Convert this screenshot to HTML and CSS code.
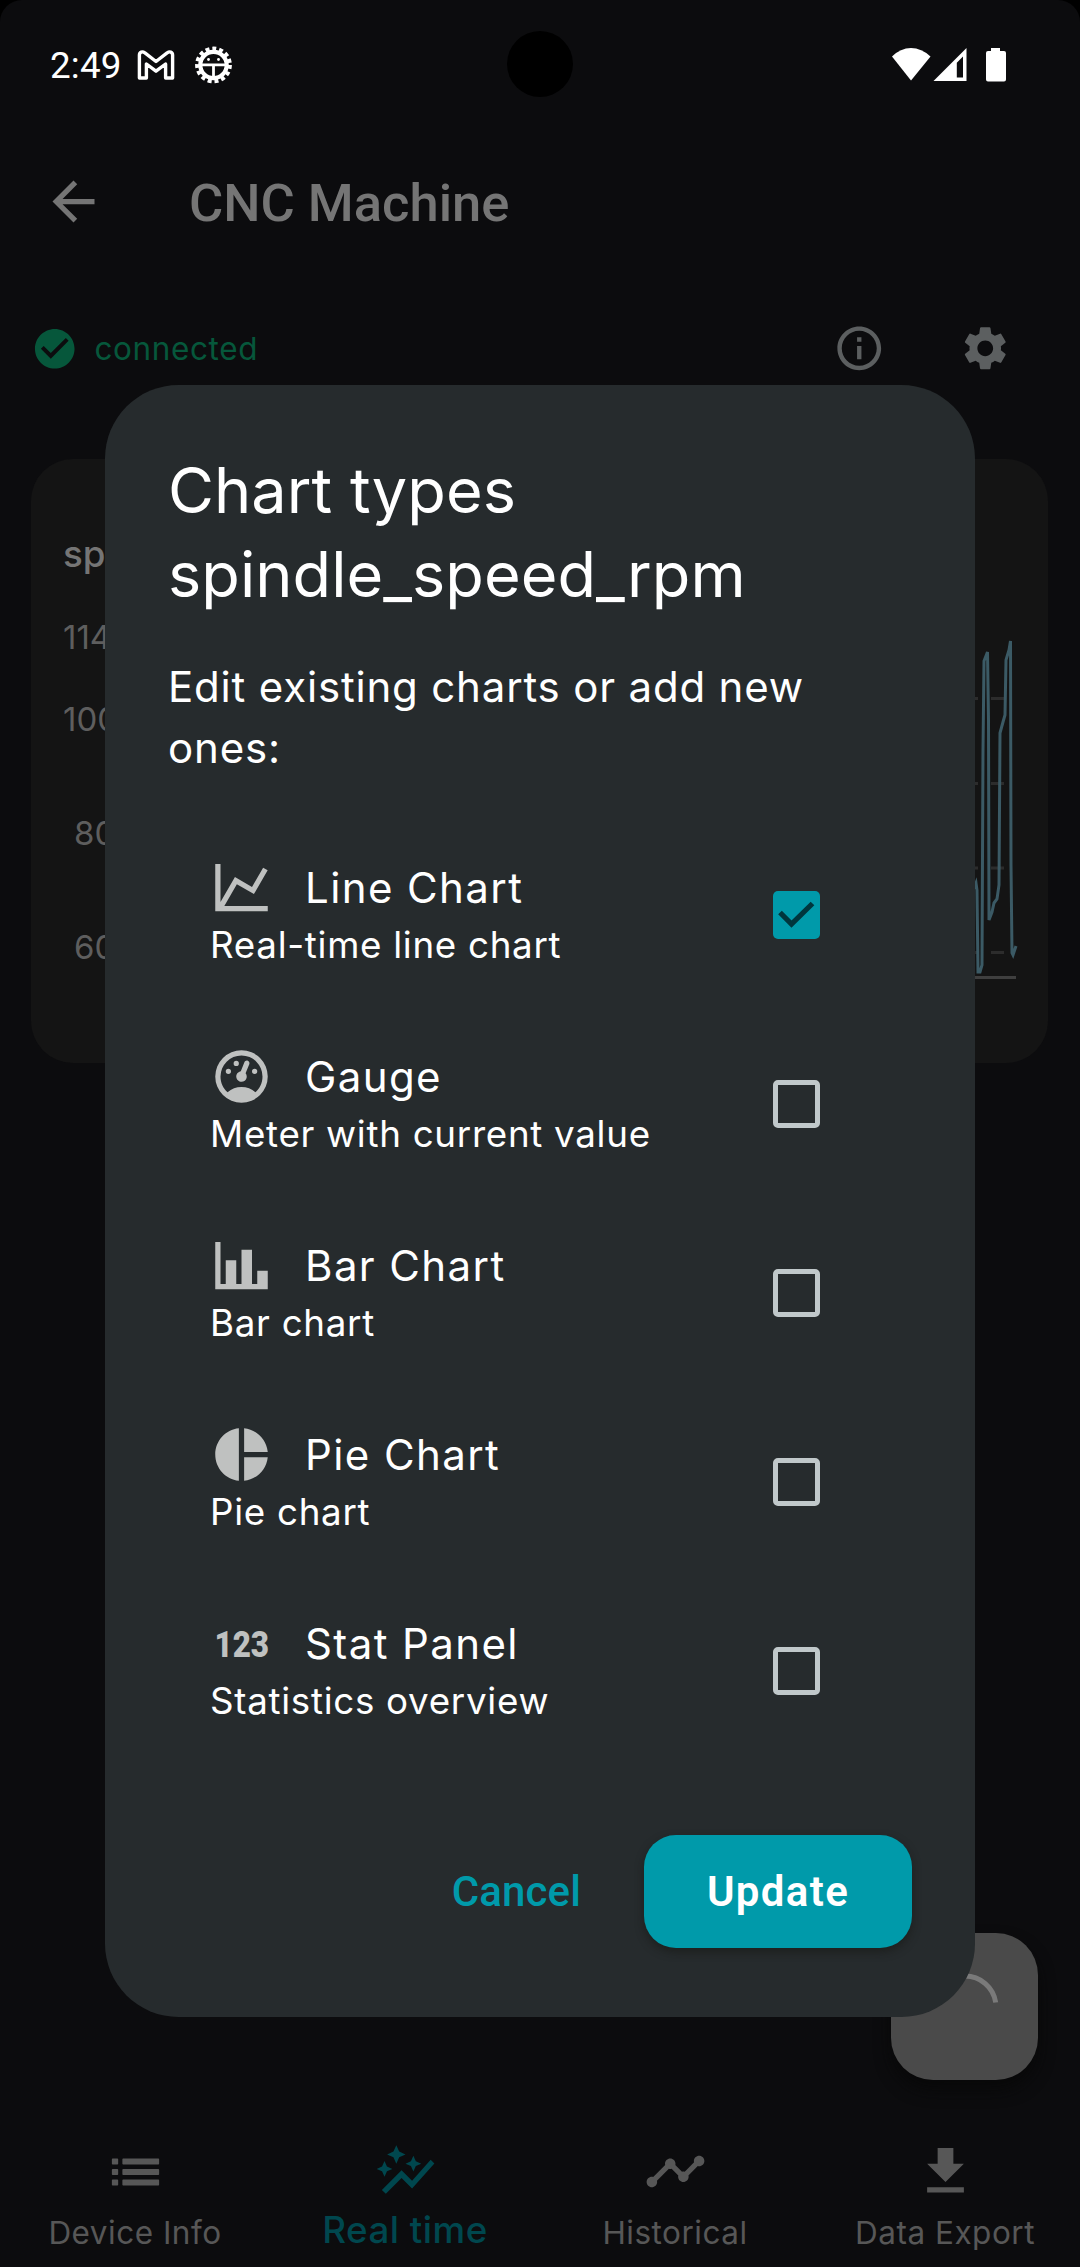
FILE: index.html
```
<!DOCTYPE html>
<html lang="en">
<head>
    <meta charset="UTF-8">
    <meta name="viewport" content="width=device-width, initial-scale=1.0">
    <title>CNC Machine</title>
    <link rel="stylesheet" href="styles.css">
</head>
<body>
    <div class="screen">
        <!-- Status Bar -->
        <div class="status-bar">
            <span class="time">2:49</span>
            <svg class="mail-icon" width="38" height="30" viewBox="0 0 38 30" fill="none" stroke="#fff" stroke-width="3.4" stroke-linejoin="round">
                <path d="M2.4 28V5C2.4 2 5.5 1 7.6 2.7L19 11.5 30.4 2.7C32.5 1 35.6 2 35.6 5V28H28.6V14L19 21.2 9.4 14V28Z"/>
            </svg>
            <svg class="bug-icon" width="37" height="38" viewBox="0 0 37 38" fill="none" stroke="#fff">
                <circle cx="18.5" cy="19" r="16.2" stroke-width="4.4" stroke-dasharray="3.9 2.89"/>
                <circle cx="18.5" cy="19" r="13.2" stroke-width="4.2"/>
                <path d="M6 18.8H31M18.5 18.8V32" stroke-width="2.8"/>
                <circle cx="13.5" cy="13.5" r="1.4" fill="#fff" stroke="none"/>
                <circle cx="23.5" cy="13.5" r="1.4" fill="#fff" stroke="none"/>
            </svg>
            <svg class="signal-icons" width="116" height="36" viewBox="0 0 116 36" fill="#fff">
                <path d="M1 9.5Q9.500 1 20 1T39.500 9.500L20 33.500Z"/>
                <path fill-rule="evenodd" d="M75.500 1V34H42.500ZM72 9.500L65.800 15.700V30.500H72Z"/>
                <path d="M100 1h9v3h4q2 0 2 2v26.500q0 2-2 2h-16q-2 0-2-2v-26.500q0-2 2-2h3z"/>
            </svg>
        </div>
        <div class="camera"></div>

        <!-- App Bar -->
        <header>
            <svg class="icon" viewBox="0 0 24 24"><path d="M20 11H7.830l5.590-5.590L12 4l-8 8 8 8 1.410-1.410L7.830 13H20v-2z"/></svg>
            <h1>CNC Machine</h1>
        </header>

        <!-- Connection Row -->
        <div class="connection">
            <svg class="check" viewBox="0 0 24 24"><path d="M12 2C6.480 2 2 6.480 2 12s4.480 10 10 10 10-4.480 10-10S17.520 2 12 2zm-2 15l-5-5 1.410-1.410L10 14.170l7.590-7.590L19 8l-9 9z"/></svg>
            <span>connected</span>
            <svg class="action info" viewBox="0 0 24 24"><path d="M11 7h2v2h-2zm0 4h2v6h-2zm1-9C6.480 2 2 6.480 2 12s4.480 10 10 10 10-4.480 10-10S17.520 2 12 2zm0 18c-4.410 0-8-3.590-8-8s3.590-8 8-8 8 3.590 8 8-3.590 8-8 8z"/></svg>
            <svg class="action" viewBox="0 0 24 24"><path d="M19.140 12.940c.04-.3.060-.61.060-.94 0-.32-.02-.64-.07-.94l2.030-1.580c.18-.14.23-.41.120-.61l-1.920-3.320c-.12-.22-.37-.29-.59-.22l-2.390.96c-.5-.38-1.030-.7-1.620-.94l-.36-2.540c-.04-.24-.24-.41-.48-.41h-3.840c-.24 0-.43.17-.47.41l-.36 2.540c-.59.24-1.130.57-1.620.94l-2.390-.96c-.22-.08-.47 0-.59.22L2.740 8.870c-.12.21-.08.47.12.61l2.030 1.580c-.05.3-.09.63-.09.94s.02.64.07.94l-2.030 1.580c-.18.14-.23.41-.12.61l1.920 3.320c.12.22.37.29.59.22l2.390-.96c.5.38 1.030.7 1.620.94l.36 2.540c.05.24.24.41.48.41h3.840c.24 0 .44-.17.47-.41l.36-2.540c.59-.24 1.130-.56 1.620-.94l2.390.96c.22.08.47 0 .59-.22l1.920-3.320c.12-.22.07-.47-.12-.61l-2.010-1.580zM12 15.600c-1.980 0-3.600-1.620-3.600-3.600s1.620-3.600 3.600-3.600 3.600 1.620 3.600 3.600-1.620 3.600-3.600 3.600z"/></svg>
        </div>

        <!-- Chart Card -->
        <div class="chart-card">
            <h2>spindle_speed_rpm</h2>
            <div class="chart">
                <div class="axis">
                    <span>1144</span>
                    <span>1000</span>
                    <span>800</span>
                    <span>600</span>
                </div>
                <svg class="plot" width="850" height="360" viewBox="168 630 850 360" fill="none">
                    <path d="M173 698.500H1005M173 783.500H1005M173 868H1005M173 952.500H1005" stroke="#2c2c2c" stroke-width="3" stroke-dasharray="13 13" stroke-dashoffset="13"/>
                    <path d="M168 977.500H1017" stroke="#3f3f3f" stroke-width="3"/>
                    <path d="M970 895L975 888 977 883 978 890 979 972 981 972 983 965 984 750 985 661 988.500 652 989.500 720 990 920 993 912 995 903 998 899 1000 885 1001 733 1004 722 1006 715 1007 660 1010 650 1011.500 641 1012 865 1013 953 1014 955 1017 946" stroke="#3b5a65" stroke-width="3"/>
                </svg>
            </div>
        </div>

        <!-- Floating Button -->
        <div class="fab">
            <svg width="68" height="68" viewBox="0 0 68 68" fill="none"><path d="M34 3A31 31 0 0 1 64.700 29.500" stroke="#7a7a7a" stroke-width="5"/></svg>
        </div>

        <!-- Bottom Navigation -->
        <nav>
            <div class="nav-item">
                <svg class="icon" viewBox="0 0 24 24"><path d="M3.300 7h1.800q.3 0 .3.300v1.700q0 .3-.3.300H3.300q-.3 0-.3-.3V7.300q0-.3.300-.3zm0 4h1.800q.3 0 .3.300v1.700q0 .3-.3.300H3.300q-.3 0-.3-.3v-1.700q0-.3.300-.3zm0 4h1.800q.3 0 .3.300v1.700q0 .3-.3.300H3.300q-.3 0-.3-.3v-1.700q0-.3.300-.3zM7.300 7h13.400q.3 0 .3.300v1.700q0 .3-.3.300H7.300q-.3 0-.3-.3V7.300q0-.3.300-.3zm0 4h13.400q.3 0 .3.300v1.700q0 .3-.3.300H7.300q-.3 0-.3-.3v-1.700q0-.3.300-.3zm0 4h13.400q.3 0 .3.300v1.700q0 .3-.3.300H7.300q-.3 0-.3-.3v-1.700q0-.3.300-.3z"/></svg>
                <span>Device Info</span>
            </div>
            <div class="nav-item active">
                <svg class="icon" viewBox="0 0 24 24"><path d="M14.060 9.940L12 9l2.060-.94L15 6l.94 2.060L18 9l-2.060.94L15 12l-.94-2.060zM4 14l.94-2.060L7 11l-2.060-.94L4 8l-.94 2.060L1 11l2.060.94L4 14zm4.500-5l1.090-2.410L12 5.500 9.590 4.410 8.500 2 7.410 4.410 5 5.500l2.410 1.090L8.500 9zm-4 11.500l6-6.010 4 4L23 8.930l-1.410-1.410-7.090 7.970-4-4L3 19l1.500 1.500z"/></svg>
                <span>Real time</span>
            </div>
            <div class="nav-item">
                <svg class="icon" viewBox="0 0 24 24"><path d="M23 8c0 1.100-.9 2-2 2-.18 0-.35-.02-.51-.07l-3.560 3.550c.05.16.07.34.07.52 0 1.100-.9 2-2 2s-2-.9-2-2c0-.18.02-.36.07-.52l-2.550-2.550c-.16.05-.34.07-.52.07s-.36-.02-.52-.07l-4.550 4.560c.05.16.07.33.07.51 0 1.100-.9 2-2 2s-2-.9-2-2 .9-2 2-2c.18 0 .35.02.51.07l4.560-4.550C8.020 9.360 8 9.180 8 9c0-1.100.9-2 2-2s2 .9 2 2c0 .18-.02.36-.07.52l2.550 2.550c.16-.05.34-.07.52-.07s.36.02.52.07l3.550-3.560C19.020 8.350 19 8.180 19 8c0-1.100.9-2 2-2s2 .9 2 2z"/></svg>
                <span>Historical</span>
            </div>
            <div class="nav-item">
                <svg class="icon" viewBox="0 0 24 24"><path d="M19 9h-4V3H9v6H5l7 7 7-7zM5 18v2h14v-2H5z"/></svg>
                <span>Data Export</span>
            </div>
        </nav>

        <!-- Chart Types Dialog -->
        <div class="dialog">
            <h2>Chart types spindle_speed_rpm</h2>
            <p>Edit existing charts or add new ones:</p>
            <ul>
                <li>
                    <div>
                        <div class="option-title">
                            <svg class="icon" viewBox="0 0 24 24"><path d="M16 11.780L20.240 4.450 21.970 5.450 16.740 14.500 10.230 10.750 5.460 19H22V21H2V3H4V17.540L9.500 8Z"/></svg>
                            Line Chart
                        </div>
                        <div class="option-text">Real-time line chart</div>
                    </div>
                    <span class="checkbox checked">
                        <svg width="48" height="48" viewBox="0 0 48 48" fill="none"><path d="M7 21.500L18.500 33 39.500 12.500" stroke="#00363d" stroke-width="5.200"/></svg>
                    </span>
                </li>
                <li>
                    <div>
                        <div class="option-title">
                            <svg class="icon" viewBox="0 0 24 24"><path fill-rule="evenodd" d="M12 2A10 10 0 0 0 2 12 10 10 0 0 0 12 22 10 10 0 0 0 22 12 10 10 0 0 0 12 2M12 4A8 8 0 0 1 20 12C20 14.400 19 16.500 17.300 18 15.900 16.700 14 16 12 16S8.200 16.700 6.700 18C5 16.500 4 14.400 4 12A8 8 0 0 1 12 4M14 5.890C13.620 5.900 13.260 6.150 13.100 6.540L11.810 9.770 11.710 10C11 10.130 10.410 10.600 10.140 11.260 9.730 12.290 10.230 13.450 11.260 13.860 12.290 14.270 13.450 13.770 13.860 12.740 14.120 12.080 14 11.320 13.570 10.760L13.670 10.500 14.960 7.290C15.170 6.750 14.920 6.170 14.410 5.960 14.280 5.910 14.150 5.890 14 5.890M10 6A1 1 0 0 0 10 8 1 1 0 0 0 10 6M7 9A1 1 0 0 0 7 11 1 1 0 0 0 7 9M17 9A1 1 0 0 0 17 11 1 1 0 0 0 17 9Z"/></svg>
                            Gauge
                        </div>
                        <div class="option-text">Meter with current value</div>
                    </div>
                    <span class="checkbox"></span>
                </li>
                <li>
                    <div>
                        <div class="option-title">
                            <svg class="icon" viewBox="0 0 24 24"><path d="M22 21H2V3H4V19H6V10H10V19H12V6H16V19H18V14H22Z"/></svg>
                            Bar Chart
                        </div>
                        <div class="option-text">Bar chart</div>
                    </div>
                    <span class="checkbox"></span>
                </li>
                <li>
                    <div>
                        <div class="option-title">
                            <svg class="icon" viewBox="0 0 24 24"><path d="M11 2V22C5.900 21.500 2 17.200 2 12S5.900 2.500 11 2M13 2V11H22C21.500 6.200 17.800 2.500 13 2M13 13V22C17.700 21.500 21.500 17.800 22 13Z"/></svg>
                            Pie Chart
                        </div>
                        <div class="option-text">Pie chart</div>
                    </div>
                    <span class="checkbox"></span>
                </li>
                <li>
                    <div>
                        <div class="option-title">
                            <svg class="icon" viewBox="0 0 24 24"><text class="digits" x="1.700" y="17" textLength="20.800" lengthAdjust="spacingAndGlyphs">123</text></svg>
                            Stat Panel
                        </div>
                        <div class="option-text">Statistics overview</div>
                    </div>
                    <span class="checkbox"></span>
                </li>
            </ul>
            <div class="actions">
                <button class="cancel">Cancel</button>
                <button class="update">Update</button>
            </div>
        </div>
    </div>
</body>
</html>
```
FILE: styles.css
```
* {
    margin: 0;
    padding: 0;
    box-sizing: border-box;
}

body {
    background-color: #000;
    font-family: Inter, sans-serif;
}

svg {
    display: block;
    flex: none;
    overflow: visible;
}

.screen {
    position: relative;
    display: flex;
    flex-direction: column;
    width: 1080px;
    height: 2267px;
    overflow: hidden;
    background-color: #0c0c0e;
    border-radius: 22px 22px 0 0;
}

.icon {
    width: 63px;
    height: 63px;
    fill: currentColor;
}

/* Status Bar */
.status-bar {
    display: flex;
    align-items: center;
    height: 128px;
    padding: 2px 73px 0 50px;
    color: white;
}

.time {
    width: 87px;
    padding-top: 1px;
    font: 400 36.75px Roboto, sans-serif;
    letter-spacing: 0.2px;
}

.bug-icon {
    margin-left: 20px;
}

.signal-icons {
    margin-left: auto;
}

.camera {
    position: absolute;
    top: 31px;
    left: 507px;
    width: 66px;
    height: 66px;
    border-radius: 50%;
    background-color: #000;
}

/* App Bar */
header {
    display: flex;
    align-items: center;
    gap: 84px;
    height: 147px;
    padding-left: 42px;
    color: #757575;
}

h1 {
    padding-top: 2px;
    font: 500 52.5px Roboto, sans-serif;
}

/* Connection Row */
.connection {
    display: flex;
    align-items: center;
    height: 147px;
    padding: 0 69px 0 31px;
    color: #06573b;
    font-size: 31.5px;
    letter-spacing: 0.6px;
}

.check {
    width: 47.5px;
    height: 47.5px;
    margin-right: 16px;
    fill: currentColor;
}

.action {
    width: 52.5px;
    height: 52.5px;
    fill: #5c5f60;
}

.info {
    margin: 0 73.5px 0 auto;
}

/* Chart Card */
.chart-card {
    height: 604px;
    margin: 37px 32px 0 31px;
    padding: 69px 31px 0 32px;
    border-radius: 42px;
    background-color: #141414;
}

.chart-card h2 {
    height: 52px;
    color: #757575;
    font-size: 36.75px;
    font-weight: 500;
    line-height: 52px;
}

.chart {
    display: flex;
    justify-content: space-between;
    padding-top: 37px;
}

.axis {
    color: #5e5e5e;
    font-size: 33px;
    line-height: 40px;
}

.axis span {
    display: block;
    height: 114px;
}

.axis span:first-child {
    height: 82px;
}

.axis span:nth-child(n+3) {
    padding-left: 11px;
}

.plot {
    margin-top: 13px;
}

/* Floating Button */
.fab {
    position: absolute;
    top: 1933px;
    left: 891px;
    display: flex;
    align-items: center;
    justify-content: center;
    width: 147px;
    height: 147px;
    border-radius: 42px;
    background-color: #4a4a4a;
    box-shadow: 0 10px 16px rgba(8, 8, 8, 0.8);
}

/* Bottom Navigation */
nav {
    display: grid;
    grid-template-columns: repeat(4, 1fr);
    height: 127px;
    margin-top: auto;
    color: #575757;
}

.nav-item {
    display: flex;
    flex-direction: column;
    align-items: center;
    font-size: 31.5px;
    letter-spacing: 0.5px;
    line-height: 60px;
}

.active {
    color: #00474e;
    font-size: 36.75px;
    font-weight: 500;
    line-height: 54px;
}

/* Dialog */
.dialog {
    position: absolute;
    top: 385px;
    left: 105px;
    display: flex;
    flex-direction: column;
    width: 870px;
    height: 1632px;
    padding: 63px 63px 69px;
    border-radius: 73.5px;
    background-color: #262b2d;
    color: white;
}

.dialog h2 {
    font-size: 63px;
    font-weight: 400;
    letter-spacing: 0.05px;
    line-height: 84px;
}

.dialog p {
    margin-top: 40px;
    font-size: 42px;
    letter-spacing: 0.82px;
    line-height: 61px;
}

ul {
    margin-top: 42px;
    list-style: none;
}

li {
    display: flex;
    align-items: center;
    justify-content: space-between;
    height: 189px;
    padding: 0 92px 0 42px;
}

.option-title {
    display: flex;
    align-items: center;
    gap: 32px;
    height: 61px;
    font-size: 42px;
    letter-spacing: 1.4px;
}

.option-title .icon {
    color: #bfc1c0;
}

.digits {
    font: 900 14px Roboto, sans-serif;
    letter-spacing: 0;
}

.option-text {
    font-size: 36.75px;
    letter-spacing: 0.7px;
    line-height: 54px;
}

.checkbox {
    width: 47px;
    height: 48px;
    border: 5px solid #c0c8ca;
    border-radius: 5px;
}

.checked {
    border: none;
    background-color: #009aaa;
}

.actions {
    display: flex;
    justify-content: flex-end;
    gap: 22px;
    margin-top: auto;
}

button {
    height: 113px;
    border: none;
    background: none;
    font: 500 42px Roboto, sans-serif;
}

.cancel {
    padding: 0 41px;
    color: #009aaa;
    letter-spacing: 0.1px;
}

.update {
    width: 268px;
    border-radius: 32px;
    background-color: #009aaa;
    box-shadow: 0 4px 8px rgba(20, 20, 16, 0.5);
    color: white;
    font-weight: 600;
    letter-spacing: 1.35px;
}
```
